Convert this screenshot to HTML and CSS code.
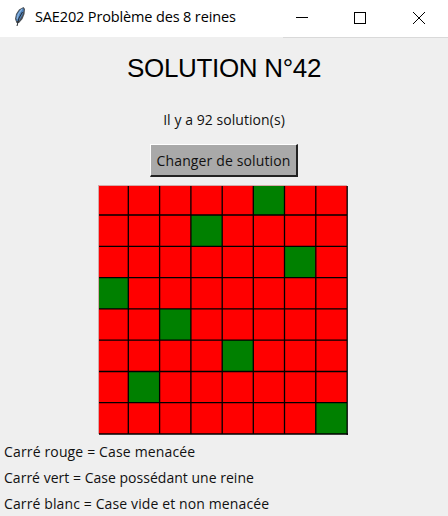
FILE: index.html
```html
<!DOCTYPE html>
<html lang="fr">
<head>
<meta charset="utf-8">
<title>SAE202 Problème des 8 reines</title>
<link rel="stylesheet" href="styles.css">
</head>
<body>
<header class="titlebar">
  <svg class="feather" viewBox="0 0 14 22" width="14" height="22">
    <path d="M10.500 1 L12 3 L11.500 8 L9.500 13 L6 17 L3.500 17 L2 13 L3 8 L6 3.500Z" fill="#4a4f55"/>
    <path d="M10 2 L10.800 4 L9.500 9 L6 15 L3.500 15 L3.500 9 L6.500 4.500Z" fill="#4d82bd"/>
    <path d="M9 3 L5.500 8 L4 13" stroke="#8ab4df" stroke-width="1.300" fill="none"/>
    <path d="M9.500 6 L6 12 L4 20" stroke="#252a30" stroke-width="1" fill="none"/>
  </svg>
  <span class="caption">SAE202 Problème des 8 reines</span>
  <svg class="controls" viewBox="0 0 130 14" width="130" height="14" shape-rendering="crispEdges">
    <path d="M0 5.500H12" stroke="#000"/>
    <path d="M58.500 .500H69.500V11.500H58.500Z" stroke="#000" fill="none"/>
    <path d="M117 0L129 12M129 0L117 12" stroke="#000" shape-rendering="auto"/>
  </svg>
</header>
<main class="content">
  <h1 class="heading">SOLUTION N°42</h1>
  <p class="count">Il y a 92 solution(s)</p>
  <button class="change"><span>Changer de solution</span></button>
  <svg class="board" viewBox="0 0 250 250" width="250" height="250">
    <rect width="249" height="249" fill="#d5aaaa"/>
    <rect x="1" y="1" width="248" height="248" fill="#f00"/>
    <g fill="#008000">
      <rect x="155" y="1" width="31" height="29"/>
      <rect x="93" y="30" width="31" height="31"/>
      <rect x="186" y="61" width="31" height="32"/>
      <rect x="1" y="93" width="29" height="31"/>
      <rect x="61" y="124" width="32" height="31"/>
      <rect x="124" y="155" width="31" height="31"/>
      <rect x="30" y="186" width="31" height="32"/>
      <rect x="217" y="218" width="32" height="31"/>
    </g>
    <path stroke="#000" stroke-width="1.300" d="M30.300 1V249M61.600 1V249M92.900 1V249M124.200 1V249M155.300 1V249M186.500 1V249M217.800 1V249M249.200 1V250M1 30H249M1 61.400H249M1 92.600H249M1 123.900H249M1 155.200H249M1 186.500H249M1 217.700H249M1 249H250"/>
  </svg>
  <ul class="legend">
    <li class="red">Carré rouge = Case menacée</li>
    <li class="green">Carré vert = Case possédant une reine</li>
    <li class="blank">Carré blanc = Case vide et non menacée</li>
  </ul>
</main>
</body>
</html>
```
FILE: styles.css
```css
* { box-sizing: border-box; }
body {
  margin: 0;
  height: 516px;
  overflow: hidden;
  background: #efefef;
  color: #111;
  font-family: "Open Sans", "Noto Sans", sans-serif;
  font-size: 14px;
}
.titlebar {
  display: flex;
  align-items: flex-start;
  height: 37px;
  padding: 6px 22px 0 13px;
  background: #fff;
}
.feather { margin-right: 8px; }
.caption {
  color: #000;
  font-size: 14.500px;
  line-height: 22px;
  letter-spacing: -0.140px;
  white-space: nowrap;
}
.controls { margin: 6px 0 0 auto; }
.content {
  display: flex;
  flex-direction: column;
  align-items: center;
  padding-top: 1px;
  background: linear-gradient(#d9d9d9, #d9d9d9) right top / 165px 1px no-repeat;
}
.heading {
  margin: 12px 0 0;
  font: 26px/36px "Liberation Sans", Arial, sans-serif;
  letter-spacing: -0.320px;
  color: #000;
  white-space: nowrap;
}
.count {
  margin: 24px 0 0;
  line-height: 20px;
  letter-spacing: 0.060px;
  white-space: nowrap;
}
.change {
  width: 148px;
  height: 33px;
  margin: 14px 0 0;
  padding: 0;
  border: solid #222;
  border-width: 1px 2px 2px 1px;
  border-top-color: #fff;
  border-left-color: #fff;
  background: #a9a9a9;
  color: #111;
  font: inherit;
  letter-spacing: 0.130px;
  white-space: nowrap;
}
.board { display: block; margin-top: 8px; margin-right: 2px; }
.legend {
  align-self: stretch;
  margin: 4px 0 0;
  padding: 0 0 0 4px;
  list-style: none;
  line-height: 26px;
}
.red { letter-spacing: 0.150px; }
.green { letter-spacing: 0.020px; }
.blank { letter-spacing: 0.120px; }
```
